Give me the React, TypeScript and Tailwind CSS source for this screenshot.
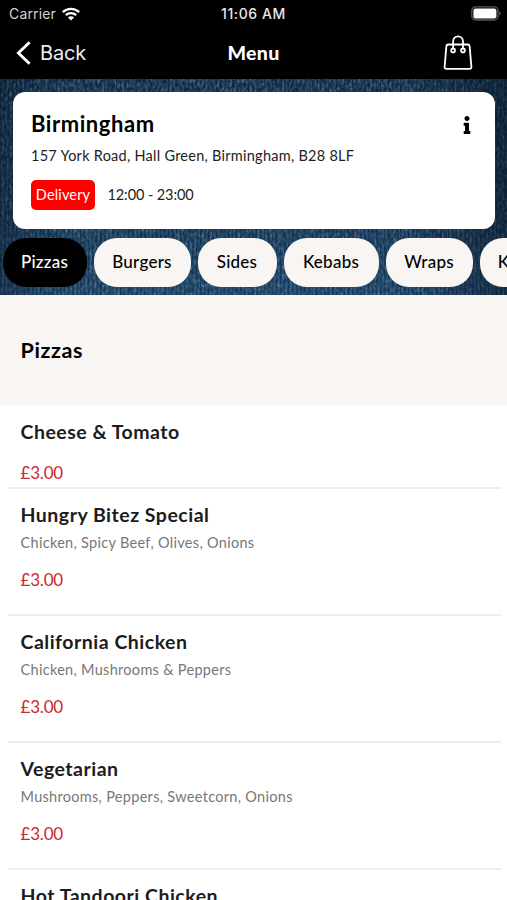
import { useState } from 'react'
import { FaInfo } from 'react-icons/fa'

interface MenuItem {
  name: string
  description?: string
  price: string
}

const CATEGORIES = [
  { label: 'Pizzas', width: 'w-[84px]' },
  { label: 'Burgers', width: 'w-[97px]' },
  { label: 'Sides', width: 'w-[79px]' },
  { label: 'Kebabs', width: 'w-[95px]' },
  { label: 'Wraps', width: 'w-[87px]' },
  { label: 'K', width: 'w-[48px]' },
]

const ITEMS: MenuItem[] = [
  { name: 'Cheese & Tomato', price: '£3.00' },
  { name: 'Hungry Bitez Special', description: 'Chicken, Spicy Beef, Olives, Onions', price: '£3.00' },
  { name: 'California Chicken', description: 'Chicken, Mushrooms & Peppers', price: '£3.00' },
  { name: 'Vegetarian', description: 'Mushrooms, Peppers, Sweetcorn, Onions', price: '£3.00' },
  { name: 'Hot Tandoori Chicken', price: '' },
]

function WifiIcon() {
  return (
    <svg width="18" height="14" viewBox="0 0 18 14" fill="none" stroke="white" strokeWidth="2.3">
      <path d="M0.8 5.1C5.4 0.7 12.6 0.7 17.2 5.1" />
      <path d="M3.8 8.2C6.7 5.4 11.3 5.4 14.2 8.2" />
      <path d="M9 13.6L5.9 10.5C7.6 8.9 10.4 8.9 12.1 10.5Z" fill="white" stroke="none" />
    </svg>
  )
}

function BatteryIcon() {
  return (
    <svg width="31" height="15" viewBox="0 0 31 15">
      <rect x="0.8" y="0.8" width="26.2" height="13.2" rx="4" fill="none" stroke="#5c5c5c" strokeWidth="1.3" />
      <rect x="2.4" y="2.6" width="23" height="9.8" rx="2.2" fill="white" />
      <path d="M28.4 5.2C30.4 6 30.4 8.8 28.4 9.6Z" fill="#5c5c5c" />
    </svg>
  )
}

function BagIcon() {
  return (
    <svg width="30" height="36" viewBox="0 0 30 36" fill="none" stroke="white" strokeWidth="1.8">
      <path d="M5.2 9.5H24.8Q26.4 9.5 26.6 11.1L28.4 31.8Q28.5 33.9 26.5 33.9H3.5Q1.5 33.9 1.6 31.8L3.4 11.1Q3.6 9.5 5.2 9.5Z" />
      <path d="M10.1 14V6.4C10.1 -0.4 20 -0.4 20 6.4V14" />
      <circle cx="10.1" cy="15.4" r="1.9" />
      <circle cx="20" cy="15.4" r="1.9" />
    </svg>
  )
}

function Denim() {
  return (
    <svg className="absolute inset-0 h-full w-full" preserveAspectRatio="none">
      <defs>
        <linearGradient id="shade" x1="0" y1="0" x2="0" y2="1">
          <stop offset="0" stopColor="#0e2741" />
          <stop offset="0.6" stopColor="#123150" />
          <stop offset="1" stopColor="#1b436b" />
        </linearGradient>
        <linearGradient id="edges" x1="0" y1="0" x2="1" y2="0">
          <stop offset="0" stopColor="#05101f" stopOpacity="0.35" />
          <stop offset="0.12" stopColor="#05101f" stopOpacity="0" />
          <stop offset="0.8" stopColor="#05101f" stopOpacity="0" />
          <stop offset="1" stopColor="#05101f" stopOpacity="0.5" />
        </linearGradient>
        <pattern id="ribs" width="4" height="8" patternUnits="userSpaceOnUse">
          <rect width="1.4" height="8" fill="#061a30" fillOpacity="0.35" />
        </pattern>
        <filter id="weave" x="0" y="0" width="100%" height="100%">
          <feTurbulence type="fractalNoise" baseFrequency="0.4 0.22" numOctaves="2" seed="4" />
          <feColorMatrix values="0 0 0 0 0.26  0 0 0 0 0.45  0 0 0 0 0.62  1.2 0 0 0 -0.45" />
        </filter>
        <filter id="grain" x="0" y="0" width="100%" height="100%">
          <feTurbulence type="fractalNoise" baseFrequency="0.3 0.35" numOctaves="2" seed="9" />
          <feColorMatrix values="0 0 0 0 0.02  0 0 0 0 0.07  0 0 0 0 0.14  0 1.4 0 0 -0.5" />
        </filter>
      </defs>
      <rect width="100%" height="100%" fill="url(#shade)" />
      <rect width="100%" height="100%" filter="url(#weave)" />
      <rect width="100%" height="100%" filter="url(#grain)" />
      <rect width="100%" height="100%" fill="url(#ribs)" />
      <rect width="100%" height="100%" fill="url(#edges)" />
    </svg>
  )
}

function StatusBar() {
  return (
    <div className="flex h-[27px] items-center justify-between pl-[9px] pr-[5px] font-[Inter] text-white">
      <div className="flex flex-1 items-center gap-[6px] text-[14px] tracking-[0.15px] text-[#d2d2d2]">
        Carrier
        <WifiIcon />
      </div>
      <span className="relative right-[2px] text-[14px] font-medium tracking-[0.6px] text-[#e8e8e8]">11:06 AM</span>
      <div className="flex flex-1 justify-end">
        <BatteryIcon />
      </div>
    </div>
  )
}

function NavBar() {
  return (
    <header className="flex h-[52px] items-center justify-between pl-4 pr-[34px] text-white">
      <button className="flex w-[120px] items-center gap-[9px] pb-px font-[Inter] text-[20px] tracking-[-0.2px] text-[#ececec]">
        <svg width="15" height="24" viewBox="0 0 15 24" fill="none" stroke="white" strokeWidth="2.9">
          <path d="M13.6 1.2L2.4 12L13.6 22.8" />
        </svg>
        Back
      </button>
      <h1 className="text-[19.5px] font-black tracking-[0.3px]">Menu</h1>
      <div className="flex w-[102px] justify-end">
        <BagIcon />
      </div>
    </header>
  )
}

function StoreCard() {
  return (
    <section className="relative ml-[13px] mr-[12.5px] h-[137px] rounded-[12px] bg-white pl-[18px] pr-[19px] pt-[17px]">
      <div className="flex h-[30px] items-center justify-between">
        <h2 className="text-[22px] font-bold tracking-[0.55px]">Birmingham</h2>
        <FaInfo size={18} className="mt-[2px]" />
      </div>
      <p className="mt-[7px] text-[14.5px] leading-[20px] tracking-[0.26px] text-[#222]">157 York Road, Hall Green, Birmingham, B28 8LF</p>
      <div className="mt-[14px] flex items-center gap-[12.5px] text-[14.5px]">
        <span className="flex h-[30px] w-[64px] items-center justify-center rounded-[5px] bg-[#fe0000] tracking-[0.15px] text-white">Delivery</span>
        <span className="pt-px tracking-[-0.1px] text-[#222]">12:00 - 23:00</span>
      </div>
    </section>
  )
}

function ItemRow({ item }: { item: MenuItem }) {
  return (
    <li className={`ml-2 mr-[6px] border-b-2 border-[#ededef] pl-[12.5px] pt-3 ${item.description ? 'h-[127px]' : 'h-[83px]'}`}>
      <h3 className="text-[19.5px] font-bold leading-[28px] tracking-[0.5px] text-[#1c1c20]">{item.name}</h3>
      {item.description && (
        <p className="mt-[3px] text-[14.5px] leading-[22px] tracking-[0.3px] text-[#777]">{item.description}</p>
      )}
      <p className={`text-[17px] leading-[24px] tracking-[-0.2px] text-[#c92a2e] ${item.description ? 'mt-[14px]' : 'mt-[15px]'}`}>
        {item.price}
      </p>
    </li>
  )
}

export default function App() {
  const [active, setActive] = useState('Pizzas')

  return (
    <div className="h-[900px] w-[507px] overflow-hidden bg-white font-[Lato,sans-serif] text-black">
      <div className="bg-black">
        <StatusBar />
        <NavBar />
      </div>
      <div className="relative h-[216px] overflow-hidden pt-[12.5px]">
        <Denim />
        <StoreCard />
        <nav className="relative mt-[9px] flex gap-[7px] pl-[3px]">
          {CATEGORIES.map(c => (
            <button
              key={c.label}
              onClick={() => setActive(c.label)}
              className={`h-[49px] shrink-0 rounded-[23px] pr-px text-[17px] font-medium tracking-[0.25px] ${c.width} ${active === c.label ? 'bg-black text-white' : 'bg-[#f8f5f2] text-black'}`}
            >
              {c.label}
            </button>
          ))}
        </nav>
      </div>
      <h2 className="flex h-[110px] items-center bg-[#f8f5f2] pl-[20.5px] text-[21.5px] font-bold tracking-[0.6px]">Pizzas</h2>
      <ul className="pt-px">
        {ITEMS.map(item => (
          <ItemRow key={item.name} item={item} />
        ))}
      </ul>
    </div>
  )
}
